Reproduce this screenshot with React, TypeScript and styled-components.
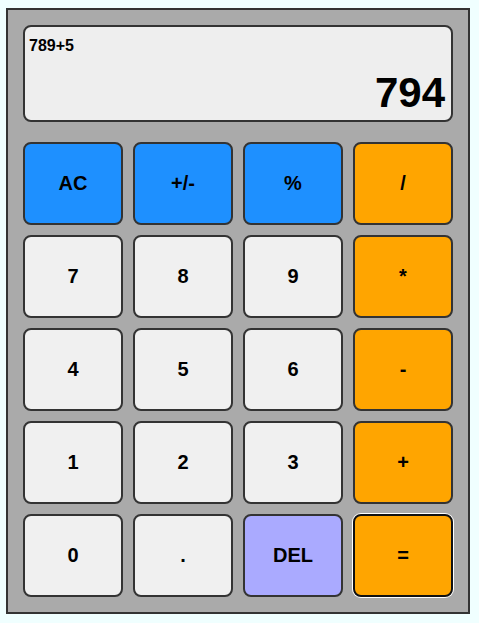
import styled, { createGlobalStyle } from "styled-components";

const GlobalStyle = createGlobalStyle`
  html, body {
    margin: 0;
    background-color: #f0ffff;
  }
  body {
    padding: 8px 0 0 6px;
    font-family: "Liberation Sans", Arial, sans-serif;
  }
`;

type Kind = "fn" | "op" | "num" | "del";

const keys: { label: string; kind: Kind; active?: boolean }[] = [
  { label: "AC", kind: "fn" },
  { label: "+/-", kind: "fn" },
  { label: "%", kind: "fn" },
  { label: "/", kind: "op" },
  { label: "7", kind: "num" },
  { label: "8", kind: "num" },
  { label: "9", kind: "num" },
  { label: "*", kind: "op" },
  { label: "4", kind: "num" },
  { label: "5", kind: "num" },
  { label: "6", kind: "num" },
  { label: "-", kind: "op" },
  { label: "1", kind: "num" },
  { label: "2", kind: "num" },
  { label: "3", kind: "num" },
  { label: "+", kind: "op" },
  { label: "0", kind: "num" },
  { label: ".", kind: "num" },
  { label: "DEL", kind: "del" },
  { label: "=", kind: "op", active: true },
];

function App() {
  return (
    <>
      <GlobalStyle />
      <Calculator>
        <Display>
          <Expression>789+5</Expression>
          <Result>794</Result>
        </Display>
        <Keypad>
          {keys.map((k) => (
            <Key key={k.label} $kind={k.kind} $active={k.active}>
              {k.label}
            </Key>
          ))}
        </Keypad>
      </Calculator>
    </>
  );
}

const colors: Record<Kind, string> = {
  fn: "#1e90ff",
  op: "#ffa500",
  num: "#f0f0f0",
  del: "#aaaaff",
};

const Calculator = styled.div`
  width: 430px;
  padding: 15px;
  background-color: #aaaaaa;
  border: 2px solid #333;
`;

const Display = styled.div`
  height: 97px;
  box-sizing: border-box;
  background-color: #eeeeee;
  border: 2px solid #333;
  border-radius: 8px;
  display: flex;
  flex-direction: column;
  justify-content: space-between;
  padding: 10px 6px 5px 4px;
`;

const Expression = styled.div`
  font-size: 16px;
  line-height: 18px;
  font-weight: 700;
  color: #000;
`;

const Result = styled.div`
  font-size: 42px;
  line-height: 44px;
  font-weight: 700;
  text-align: right;
  color: #000;
`;

const Keypad = styled.div`
  margin-top: 20px;
  display: grid;
  grid-template-columns: repeat(4, 1fr);
  grid-auto-rows: 83px;
  gap: 10px;
`;

const Key = styled.button<{ $kind: Kind; $active?: boolean }>`
  background-color: ${(p) => colors[p.$kind]};
  border: 2px solid ${(p) => (p.$active ? "#111" : "#333")};
  border-radius: 8px;
  box-shadow: ${(p) => (p.$active ? "0 0 0 1px #fff" : "none")};
  font-family: "Liberation Sans", Arial, sans-serif;
  font-size: 20px;
  font-weight: 700;
  color: #000;
  padding: 0;
  cursor: pointer;
`;

export default App;
